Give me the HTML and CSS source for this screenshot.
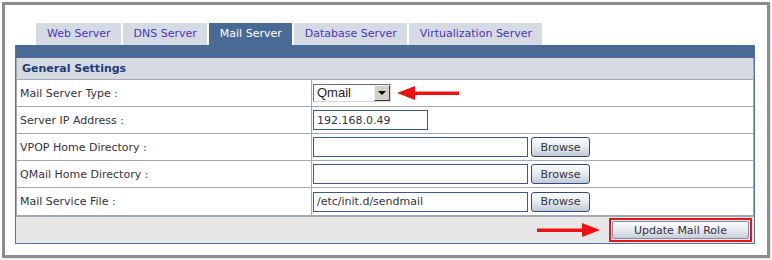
FILE: index.html
```html
<!DOCTYPE html>
<html lang="en">
<head>
  <meta charset="UTF-8" />
  <title>Mail Server Role</title>
  <link rel="stylesheet" href="styles.css">
</head>
<body>
  <div class="frame">
    <ul class="tabs">
      <li class="tab">Web Server</li>
      <li class="tab">DNS Server</li>
      <li class="tab active">Mail Server</li>
      <li class="tab">Database Server</li>
      <li class="tab">Virtualization Server</li>
    </ul>

    <div class="panel">
      <div class="panel-bar"></div>
      <div class="settings">
        <div class="settings-head">General Settings</div>

        <div class="row">
          <div class="label">Mail Server Type :</div>
          <div class="value">
            <div class="select">
              <span class="select-text">Qmail</span>
              <span class="select-btn"></span>
            </div>
            <svg class="arrow arrow-left" width="62" height="14" viewBox="0 0 62 14">
              <polygon points="0,7 18,0 18,14" fill="#ee1111"/>
              <rect x="16" y="5.5" width="46" height="3.5" fill="#ee1111"/>
            </svg>
          </div>
        </div>

        <div class="row">
          <div class="label">Server IP Address :</div>
          <div class="value">
            <input class="field field-short" type="text" value="192.168.0.49">
          </div>
        </div>

        <div class="row">
          <div class="label">VPOP Home Directory :</div>
          <div class="value">
            <input class="field" type="text" value="">
            <button class="browse">Browse</button>
          </div>
        </div>

        <div class="row">
          <div class="label">QMail Home Directory :</div>
          <div class="value">
            <input class="field" type="text" value="">
            <button class="browse">Browse</button>
          </div>
        </div>

        <div class="row last">
          <div class="label">Mail Service File :</div>
          <div class="value">
            <input class="field" type="text" value="/etc/init.d/sendmail">
            <button class="browse">Browse</button>
          </div>
        </div>
      </div>

      <div class="panel-foot">
        <svg class="arrow" width="63" height="14" viewBox="0 0 63 14">
          <rect x="0" y="5.5" width="47" height="3.5" fill="#ee1111"/>
          <polygon points="63,7 45,0 45,14" fill="#ee1111"/>
        </svg>
        <div class="highlight">
          <button class="update">Update Mail Role</button>
        </div>
      </div>
    </div>
  </div>
</body>
</html>
```

FILE: styles.css
```css
:root {
  --blue: #4a6a96;
  --panel-line: #5670a0;
  --grid-line: #a3a8b2;
  --tab-bg: #d6dae3;
  --tab-text: #4a35b8;
  --text: #333340;
}

html, body {
  margin: 0;
  padding: 0;
  background: #fff;
  font-family: 'DejaVu Sans', Verdana, sans-serif;
  font-size: 11px;
  color: var(--text);
}

.frame {
  margin: 2px;
  width: 762px;
  height: 232px;
  border: 3px solid #8c8c8c;
  box-shadow: 1px 1px 2px rgba(0, 0, 0, 0.15);
  padding: 18px 0 0 0;
  box-sizing: content-box;
}

.tabs {
  list-style: none;
  margin: 0 0 0 31px;
  padding: 0;
  display: flex;
  gap: 2px;
}

.tab {
  height: 22px;
  line-height: 22px;
  padding: 0 10px 0 11px;
  text-align: center;
  background: var(--tab-bg);
  color: var(--tab-text);
}

.tab.active {
  background: var(--blue);
  color: #fff;
}

.panel {
  margin-left: 10px;
  width: 738px;
  border: 1px solid var(--panel-line);
  border-top: none;
  background: #e7e7e7;
}

.panel-bar {
  height: 13px;
  background: var(--blue);
}

.settings {
  background: #fff;
  border-left: 1px solid var(--grid-line);
  border-right: 1px solid var(--grid-line);
  border-bottom: 2px solid var(--grid-line);
}

.settings-head {
  height: 21px;
  line-height: 21px;
  padding-left: 5px;
  background: #d5dae2;
  border-bottom: 1px solid var(--grid-line);
  font-weight: bold;
  color: #1e3c78;
}

.row {
  display: grid;
  grid-template-columns: 295px 1fr;
  height: 26px;
  border-bottom: 1px solid var(--grid-line);
}

.row.last {
  border-bottom: none;
  height: 27px;
}

.label {
  display: flex;
  align-items: center;
  padding-left: 3px;
  border-right: 1px solid var(--grid-line);
}

.value {
  display: flex;
  align-items: center;
  padding-left: 1px;
  gap: 3px;
}

.field {
  box-sizing: border-box;
  width: 215px;
  height: 20px;
  margin: 0;
  padding: 0 3px;
  border: 1px solid #3b5898;
  font-family: inherit;
  font-size: 11px;
  color: var(--text);
  background: #fff;
}

.field-short {
  width: 115px;
}

.browse {
  box-sizing: border-box;
  width: 59px;
  height: 20px;
  margin: 0;
  padding: 0;
  border: 1px solid #2f4b7c;
  border-radius: 3px;
  background: linear-gradient(#fbfcfd, #e6eaf0 50%, #c2cad7);
  font-family: inherit;
  font-size: 11px;
  color: var(--text);
}

.select {
  box-sizing: border-box;
  width: 78px;
  height: 18px;
  display: flex;
  border-top: 1px solid #6e6e6e;
  border-left: 1px solid #6e6e6e;
  border-right: 1px solid #d6d6d6;
  border-bottom: 1px solid #d6d6d6;
  background: #fff;
}

.select-text {
  flex: 1;
  padding-left: 3px;
  line-height: 16px;
  font-family: 'Liberation Sans', Arial, sans-serif;
  font-size: 13px;
  color: #222;
}

.select-btn {
  box-sizing: border-box;
  width: 16px;
  height: 16px;
  background: #d4d0c8;
  border-top: 1px solid #f4f4f4;
  border-left: 1px solid #f4f4f4;
  border-right: 1px solid #404040;
  border-bottom: 1px solid #404040;
  position: relative;
}

.select-btn::after {
  content: "";
  position: absolute;
  left: 3px;
  top: 5px;
  border-left: 4px solid transparent;
  border-right: 4px solid transparent;
  border-top: 4px solid #000;
}

.arrow {
  display: block;
}

.arrow-left {
  margin-left: 3px;
}

.panel-foot {
  height: 26px;
  display: flex;
  align-items: center;
  justify-content: flex-end;
  gap: 9px;
  padding-right: 2px;
}

.highlight {
  border: 2px solid #e41515;
  padding: 1px;
}

.update {
  display: block;
  box-sizing: border-box;
  width: 137px;
  height: 18px;
  margin: 0;
  padding: 0;
  border: 1px solid #7d8fae;
  border-radius: 2px;
  background: linear-gradient(#fbfcfd, #e8ebf0 50%, #c6cdd8);
  font-family: inherit;
  font-size: 11px;
  color: var(--text);
}
```
